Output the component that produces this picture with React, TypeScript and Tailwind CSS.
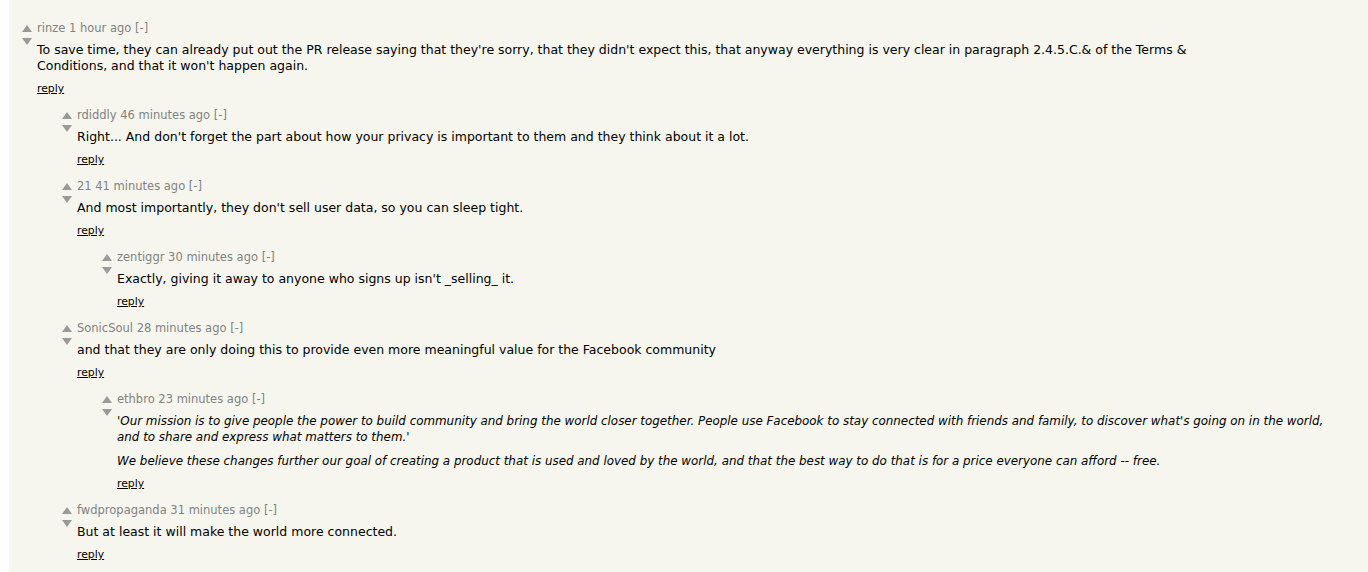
type Comment = {
  user: string;
  age: string;
  level: number;
  paragraphs: string[];
  italic?: boolean;
};

const comments: Comment[] = [
  {
    user: "rinze",
    age: "1 hour ago",
    level: 0,
    paragraphs: [
      "To save time, they can already put out the PR release saying that they're sorry, that they didn't expect this, that anyway everything is very clear in paragraph 2.4.5.C.& of the Terms & Conditions, and that it won't happen again.",
    ],
  },
  {
    user: "rdiddly",
    age: "46 minutes ago",
    level: 1,
    paragraphs: [
      "Right... And don't forget the part about how your privacy is important to them and they think about it a lot.",
    ],
  },
  {
    user: "21",
    age: "41 minutes ago",
    level: 1,
    paragraphs: [
      "And most importantly, they don't sell user data, so you can sleep tight.",
    ],
  },
  {
    user: "zentiggr",
    age: "30 minutes ago",
    level: 2,
    paragraphs: [
      "Exactly, giving it away to anyone who signs up isn't _selling_ it.",
    ],
  },
  {
    user: "SonicSoul",
    age: "28 minutes ago",
    level: 1,
    paragraphs: [
      "and that they are only doing this to provide even more meaningful value for the Facebook community",
    ],
  },
  {
    user: "ethbro",
    age: "23 minutes ago",
    level: 2,
    italic: true,
    paragraphs: [
      "'Our mission is to give people the power to build community and bring the world closer together. People use Facebook to stay connected with friends and family, to discover what's going on in the world, and to share and express what matters to them.'",
      "We believe these changes further our goal of creating a product that is used and loved by the world, and that the best way to do that is for a price everyone can afford -- free.",
    ],
  },
  {
    user: "fwdpropaganda",
    age: "31 minutes ago",
    level: 1,
    paragraphs: ["But at least it will make the world more connected."],
  },
];

const indents = ["w-0", "w-[40px]", "w-[80px]"];

const VoteArrows = () => (
  <div className="w-[16px] shrink-0 flex flex-col pl-[1px]">
    <svg width="10" height="7" viewBox="0 0 10 7" className="mt-[4px]">
      <polygon points="5,0 10,7 0,7" fill="#9a9a9a" />
    </svg>
    <svg width="10" height="7" viewBox="0 0 10 7" className="mt-[6px]">
      <polygon points="0,0 10,0 5,7" fill="#9a9a9a" />
    </svg>
  </div>
);

const CommentRow = ({ c }: { c: Comment }) => (
  <div className="flex mb-[12px]">
    <div className={`${indents[c.level]} shrink-0`} />
    <VoteArrows />
    <div className="flex-1 min-w-0">
      <div className="h-[14px] leading-[14px] text-[11.5px] text-[#828282]">
        {c.user} {c.age} [-]
      </div>
      <div
        className={`mt-[7px] max-w-[1215px] leading-[16px] text-black ${
          c.italic ? "italic text-[11.9px]" : "text-[12.5px]"
        }`}
      >
        {c.paragraphs.map((p, i) => (
          <p key={i} className={i > 0 ? "mt-[8px]" : ""}>
            {p}
          </p>
        ))}
      </div>
      <div className="mt-[8px] h-[14px] leading-[14px] text-[10.8px]">
        <span className="underline text-black">reply</span>
      </div>
    </div>
  </div>
);

export default function App() {
  return (
    <div
      className="bg-white pl-[9px] min-h-[572px] flex"
      style={{ fontFamily: "Verdana, 'DejaVu Sans', sans-serif" }}
    >
      <div className="flex-1 bg-[#f6f6ef] pt-[21px] pl-[12px]">
        {comments.map((c, i) => (
          <CommentRow key={i} c={c} />
        ))}
      </div>
    </div>
  );
}
